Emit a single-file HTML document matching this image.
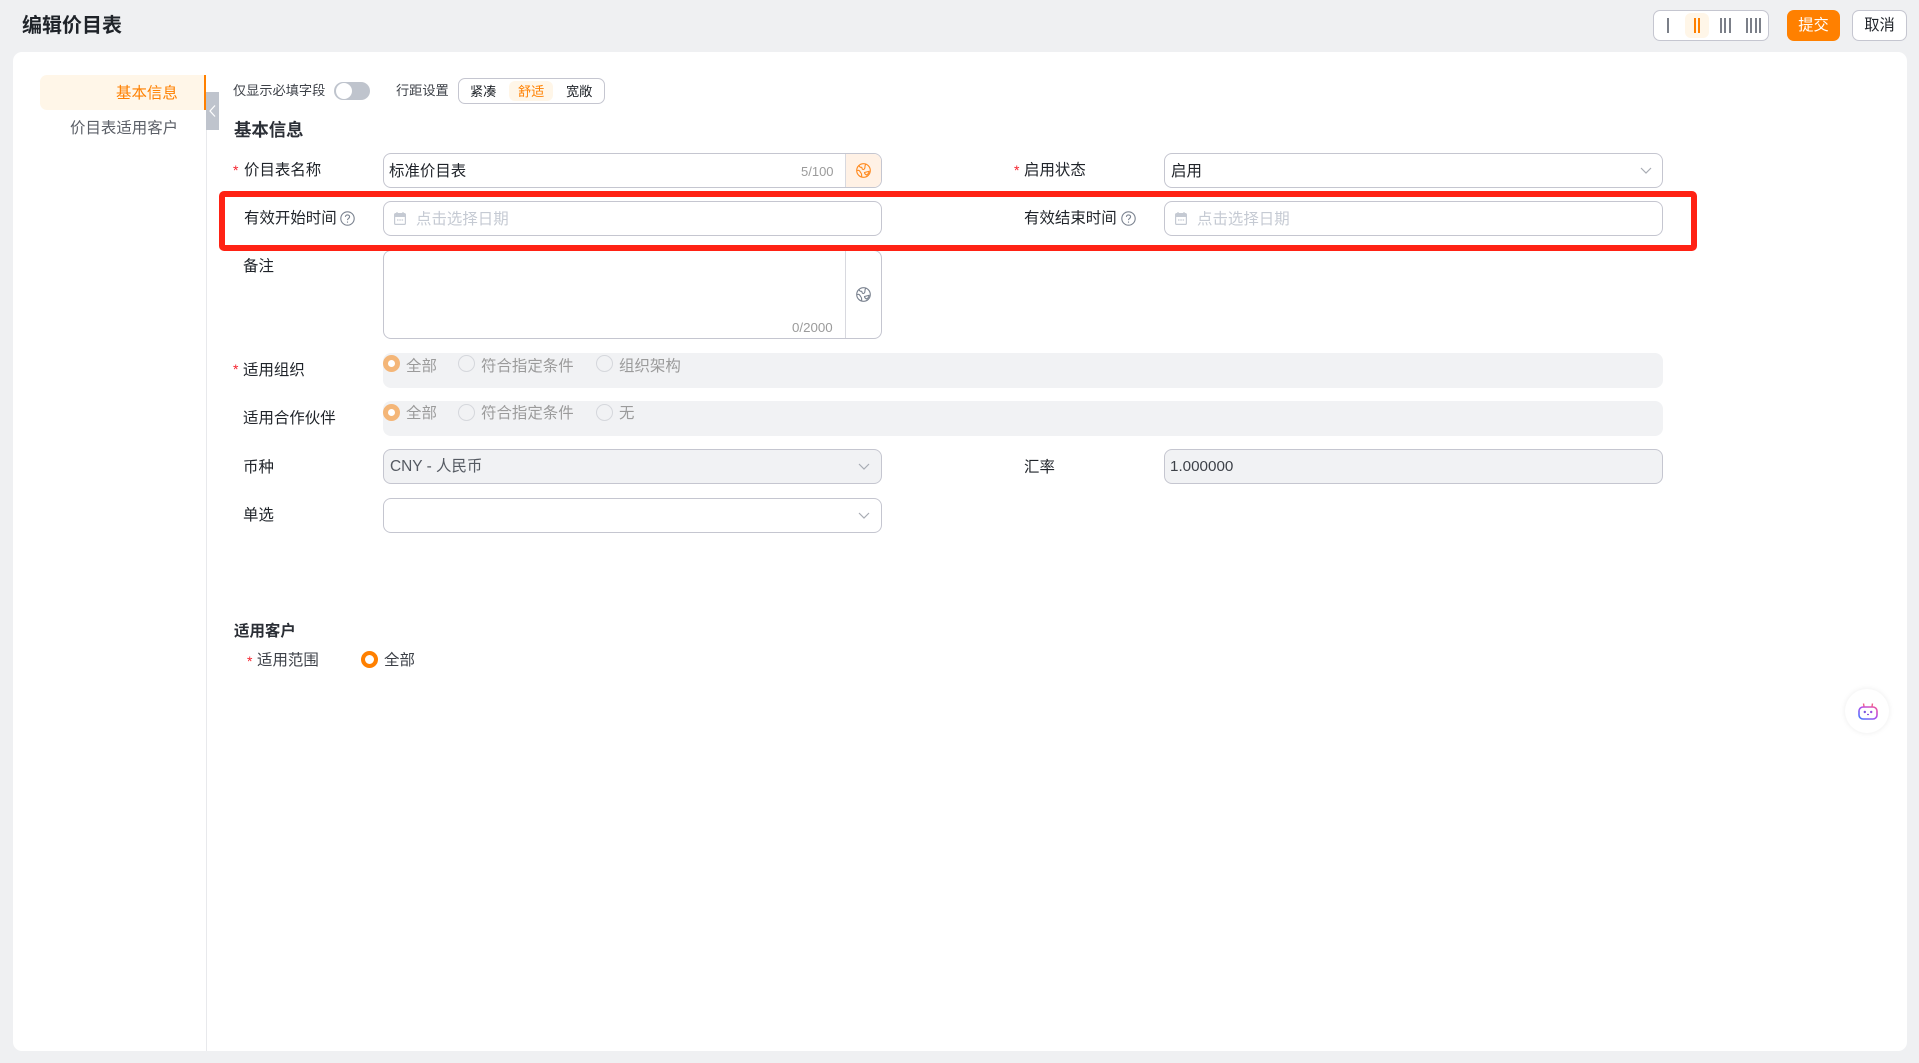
<!DOCTYPE html>
<html lang="zh-CN">
<head>
<meta charset="utf-8">
<title>编辑价目表</title>
<style>
html,body{margin:0;padding:0;width:1919px;height:1063px;overflow:hidden;background:#EFF0F2;}
body{position:relative;font-family:"Liberation Sans","Noto Sans CJK SC",sans-serif;color:#1f2329;}
.a{position:absolute;box-sizing:border-box;}
.t{position:absolute;white-space:nowrap;line-height:20px;height:20px;font-size:15.45px;margin-top:1px;}
.s{font-size:13.2px;}
.star{position:absolute;color:#f5222d;font-size:14px;line-height:20px;height:20px;}
.inp{position:absolute;box-sizing:border-box;border:1px solid #C5C6D0;border-radius:8px;background:#fff;}
.g{color:#9b9b9b;}
.ph{color:#C5CAD3;}
.r{position:absolute;box-sizing:border-box;width:17px;height:17px;border-radius:50%;border:1px solid #D5D7DC;background:#F1F2F4;}
.ron{border:5px solid #F4B678;background:#fff;}
svg{position:absolute;display:block;overflow:visible;}
</style>
</head>
<body>
<div class="t" style="left:22px;top:15px;font-size:20px;font-weight:700;color:#1f2329;">编辑价目表</div>

<!-- header tools -->
<div class="a" style="left:1653px;top:10px;width:116px;height:31px;background:#fff;border:1px solid #C5C6D0;border-radius:7px;"></div>
<div class="a" style="left:1685px;top:13px;width:24px;height:25px;background:#FFF6E8;border-radius:6px;"></div>
<div class="a" style="left:1667px;top:18px;width:2px;height:15px;background:#7B7F88;"></div>
<div class="a" style="left:1694px;top:18px;width:2px;height:15px;background:#FF8000;"></div>
<div class="a" style="left:1698px;top:18px;width:2px;height:15px;background:#FF8000;"></div>
<div class="a" style="left:1720px;top:18px;width:2px;height:15px;background:#7B7F88;"></div>
<div class="a" style="left:1724px;top:18px;width:2px;height:15px;background:#7B7F88;"></div>
<div class="a" style="left:1729px;top:18px;width:2px;height:15px;background:#7B7F88;"></div>
<div class="a" style="left:1746px;top:18px;width:2px;height:15px;background:#7B7F88;"></div>
<div class="a" style="left:1750px;top:18px;width:2px;height:15px;background:#7B7F88;"></div>
<div class="a" style="left:1755px;top:18px;width:2px;height:15px;background:#7B7F88;"></div>
<div class="a" style="left:1759px;top:18px;width:2px;height:15px;background:#7B7F88;"></div>
<div class="a" style="left:1787px;top:10px;width:53px;height:31px;background:#FF8000;border-radius:7px;color:#fff;text-align:center;line-height:31px;font-size:15.3px;">提交</div>
<div class="a" style="left:1852px;top:10px;width:55px;height:31px;background:#fff;border:1px solid #C5C6D0;border-radius:7px;text-align:center;line-height:30px;font-size:15.3px;color:#1f2329;">取消</div>

<!-- card -->
<div class="a" style="left:13px;top:52px;width:1894px;height:999px;background:#fff;border-radius:9px;"></div>

<!-- sidebar -->
<div class="a" style="left:40px;top:75px;width:166px;height:35px;background:#FFF6E8;border-right:2px solid #FF8000;border-radius:7px 0 0 7px;"></div>
<div class="t" style="left:116px;top:83px;color:#FF8000;">基本信息</div>
<div class="t" style="left:70px;top:118px;color:#5c6068;">价目表适用客户</div>
<div class="a" style="left:206px;top:110px;width:1px;height:941px;background:#E8E9EC;"></div>
<div class="a" style="left:206px;top:92px;width:13px;height:38px;background:#BFC4CD;"></div>
<svg style="left:209px;top:105px;" width="7" height="12" viewBox="0 0 7 12"><path d="M6 .5L1 6l5 5.500" fill="none" stroke="#fff" stroke-width="1.200"/></svg>

<!-- toolbar -->
<div class="t s" style="left:233px;top:80px;color:#3d4148;">仅显示必填字段</div>
<div class="a" style="left:334px;top:82px;width:36px;height:18px;background:#BFC4CD;border-radius:9px;"></div>
<div class="a" style="left:336px;top:83px;width:16px;height:16px;background:#fff;border-radius:50%;"></div>
<div class="t s" style="left:396px;top:80px;color:#3d4148;">行距设置</div>
<div class="a" style="left:458px;top:78px;width:147px;height:26px;background:#fff;border:1px solid #C5C6D0;border-radius:7px;"></div>
<div class="a" style="left:509px;top:81px;width:44px;height:20px;background:#FFF6E8;border-radius:6px;"></div>
<div class="t s" style="left:470px;top:81px;">紧凑</div>
<div class="t s" style="left:518px;top:81px;color:#FF8000;">舒适</div>
<div class="t s" style="left:566px;top:81px;">宽敞</div>

<div class="t" style="left:234px;top:119px;font-size:17.400px;font-weight:700;color:#2b2f36;">基本信息</div>

<!-- row 1 -->
<div class="star" style="left:233px;top:160px;">*</div>
<div class="t" style="left:244px;top:160px;">价目表名称</div>
<div class="inp" style="left:383px;top:153px;width:499px;height:35px;"></div>
<div class="a" style="left:845px;top:154px;width:36px;height:33px;background:#FFF1E5;border-left:1px solid #D8D9DF;border-radius:0 7px 7px 0;"></div>
<div class="t" style="left:389px;top:161px;">标准价目表</div>
<div class="t g" style="left:801px;top:161px;font-size:13px;">5/100</div>
<svg style="left:856px;top:163px;" width="15" height="15" viewBox="0 0 15 15" fill="none" stroke="#FF8A1F" stroke-width="1.100"><circle cx="7.500" cy="7.500" r="6.800"/><path d="M3 2.500c.5 1.500 1.500 2 2.500 1.800 1 .5 0 2 1.500 2.200 1.500.2 2-1.500 2-3 0-1 .5-2 1-2.500M1 7.500c1.500-.5 2.500 0 3 1 .5 1.200 1.200 1.500 1.500 2.500.2 1 0 2 .3 2.800M8.500 9.500l4.500-1.200c0 1.500-1 3-2.500 3.700-1-.5-2-1.500-2-2.500z"/></svg>

<div class="star" style="left:1014px;top:160px;">*</div>
<div class="t" style="left:1024px;top:160px;">启用状态</div>
<div class="inp" style="left:1164px;top:153px;width:499px;height:35px;"></div>
<div class="t" style="left:1171px;top:161px;">启用</div>
<svg style="left:1640px;top:167px;" width="12" height="7" viewBox="0 0 12 7"><path d="M1 1l5 5 5-5" fill="none" stroke="#A8ACB3" stroke-width="1.200"/></svg>

<!-- row 2 -->
<div class="t" style="left:244px;top:208px;">有效开始时间</div>
<svg style="left:340px;top:211px;" width="15" height="15" viewBox="0 0 15 15" fill="none" stroke="#7B8390" stroke-width="1.100"><circle cx="7.500" cy="7.500" r="6.700"/><path d="M5.400 5.900c0-1.300 1-2 2.100-2s2.100.8 2.100 1.900c0 1.600-2.100 1.600-2.100 3.300"/><path d="M7.500 10.500v1.200"/></svg>
<div class="inp" style="left:383px;top:201px;width:499px;height:35px;"></div>
<svg style="left:394px;top:212px;" width="12" height="13" viewBox="0 0 12 13"><path d="M3 0v2M9 0v2" stroke="#C5CAD3" stroke-width="1.200"/><rect x=".6" y="1.600" width="10.800" height="10.800" rx="1.200" fill="none" stroke="#C5CAD3" stroke-width="1.200"/><rect x="1" y="2" width="10" height="3" fill="#C5CAD3"/><path d="M3 8h1.500M5.300 8h1.500M7.600 8h1.500" stroke="#C5CAD3" stroke-width="1.200"/></svg>
<div class="t ph" style="left:416px;top:209px;">点击选择日期</div>

<div class="t" style="left:1024px;top:208px;">有效结束时间</div>
<svg style="left:1121px;top:211px;" width="15" height="15" viewBox="0 0 15 15" fill="none" stroke="#7B8390" stroke-width="1.100"><circle cx="7.500" cy="7.500" r="6.700"/><path d="M5.400 5.900c0-1.300 1-2 2.100-2s2.100.8 2.100 1.900c0 1.600-2.100 1.600-2.100 3.300"/><path d="M7.500 10.500v1.200"/></svg>
<div class="inp" style="left:1164px;top:201px;width:499px;height:35px;"></div>
<svg style="left:1175px;top:212px;" width="12" height="13" viewBox="0 0 12 13"><path d="M3 0v2M9 0v2" stroke="#C5CAD3" stroke-width="1.200"/><rect x=".6" y="1.600" width="10.800" height="10.800" rx="1.200" fill="none" stroke="#C5CAD3" stroke-width="1.200"/><rect x="1" y="2" width="10" height="3" fill="#C5CAD3"/><path d="M3 8h1.500M5.300 8h1.500M7.600 8h1.500" stroke="#C5CAD3" stroke-width="1.200"/></svg>
<div class="t ph" style="left:1197px;top:209px;">点击选择日期</div>

<!-- row 3 -->
<div class="t" style="left:243px;top:256px;">备注</div>
<div class="inp" style="left:383px;top:250px;width:499px;height:89px;"></div>
<div class="a" style="left:845px;top:251px;width:1px;height:87px;background:#D8D9DF;"></div>
<div class="t g" style="left:792px;top:317px;font-size:13.300px;">0/2000</div>
<svg style="left:856px;top:287px;" width="15" height="15" viewBox="0 0 15 15" fill="none" stroke="#7B8390" stroke-width="1.100"><circle cx="7.500" cy="7.500" r="6.800"/><path d="M3 2.500c.5 1.500 1.500 2 2.500 1.800 1 .5 0 2 1.500 2.200 1.500.2 2-1.500 2-3 0-1 .5-2 1-2.500M1 7.500c1.500-.5 2.500 0 3 1 .5 1.200 1.200 1.500 1.500 2.500.2 1 0 2 .3 2.800M8.500 9.500l4.500-1.200c0 1.500-1 3-2.500 3.700-1-.5-2-1.500-2-2.500z"/></svg>

<!-- red box -->
<div class="a" style="left:219px;top:191px;width:1478px;height:60px;border:6px solid #FF2214;border-radius:5px;"></div>

<!-- row 4 -->
<div class="star" style="left:233px;top:359px;">*</div>
<div class="t" style="left:243px;top:360px;">适用组织</div>
<div class="a" style="left:383px;top:353px;width:1280px;height:35px;background:#F1F2F4;border-radius:8px;"></div>
<div class="r ron" style="left:383px;top:355px;"></div>
<div class="t g" style="left:406px;top:356px;">全部</div>
<div class="r" style="left:458px;top:355px;"></div>
<div class="t g" style="left:481px;top:356px;">符合指定条件</div>
<div class="r" style="left:596px;top:355px;"></div>
<div class="t g" style="left:619px;top:356px;">组织架构</div>

<!-- row 5 -->
<div class="t" style="left:243px;top:408px;">适用合作伙伴</div>
<div class="a" style="left:383px;top:401px;width:1280px;height:35px;background:#F1F2F4;border-radius:8px;"></div>
<div class="r ron" style="left:383px;top:404px;"></div>
<div class="t g" style="left:406px;top:403px;">全部</div>
<div class="r" style="left:458px;top:404px;"></div>
<div class="t g" style="left:481px;top:403px;">符合指定条件</div>
<div class="r" style="left:596px;top:404px;"></div>
<div class="t g" style="left:619px;top:403px;">无</div>

<!-- row 6 -->
<div class="t" style="left:243px;top:457px;">币种</div>
<div class="inp" style="left:383px;top:449px;width:499px;height:35px;background:#F1F2F4;"></div>
<div class="t" style="left:390px;top:456px;color:#555a62;">CNY - 人民币</div>
<svg style="left:858px;top:463px;" width="12" height="7" viewBox="0 0 12 7"><path d="M1 1l5 5 5-5" fill="none" stroke="#A8ACB3" stroke-width="1.200"/></svg>
<div class="t" style="left:1024px;top:457px;">汇率</div>
<div class="inp" style="left:1164px;top:449px;width:499px;height:35px;background:#F1F2F4;"></div>
<div class="t" style="left:1170px;top:456px;color:#3d4148;font-size:15.200px;">1.000000</div>

<!-- row 7 -->
<div class="t" style="left:243px;top:505px;">单选</div>
<div class="inp" style="left:383px;top:498px;width:499px;height:35px;"></div>
<svg style="left:858px;top:512px;" width="12" height="7" viewBox="0 0 12 7"><path d="M1 1l5 5 5-5" fill="none" stroke="#A8ACB3" stroke-width="1.200"/></svg>

<!-- customers -->
<div class="t" style="left:234px;top:621px;font-weight:700;color:#2b2f36;">适用客户</div>
<div class="star" style="left:247px;top:651px;">*</div>
<div class="t" style="left:257px;top:650px;color:#3d4148;">适用范围</div>
<div class="a" style="left:361px;top:651px;width:17px;height:17px;border-radius:50%;border:4px solid #FF8000;background:#fff;"></div>
<div class="t" style="left:384px;top:650px;color:#3d4148;">全部</div>

<!-- bot -->
<div class="a" style="left:1845px;top:689px;width:44px;height:44px;border-radius:50%;background:#fff;box-shadow:0 0 6px rgba(0,0,0,.08);"></div>
<svg style="left:1858px;top:702px;" width="20" height="18" viewBox="0 0 20 18">
<defs><linearGradient id="bg" x1="0" y1="1" x2="1" y2="0"><stop offset="0" stop-color="#3D7BFF"/><stop offset=".55" stop-color="#B14BEB"/><stop offset="1" stop-color="#F0569A"/></linearGradient></defs>
<rect x="1" y="5" width="18" height="12" rx="4" fill="none" stroke="url(#bg)" stroke-width="1.600"/>
<path d="M6 4.500L5.500 1.500M14 4.500l.5-3" stroke="#F0608A" stroke-width="1.400" fill="none"/>
<circle cx="6.800" cy="10" r="1.200" fill="#7a55e0"/><circle cx="13.200" cy="10" r="1.200" fill="#9a50e0"/>
<path d="M9 12.500h2" stroke="#8a50e0" stroke-width="1.200"/>
</svg>
</body>
</html>
